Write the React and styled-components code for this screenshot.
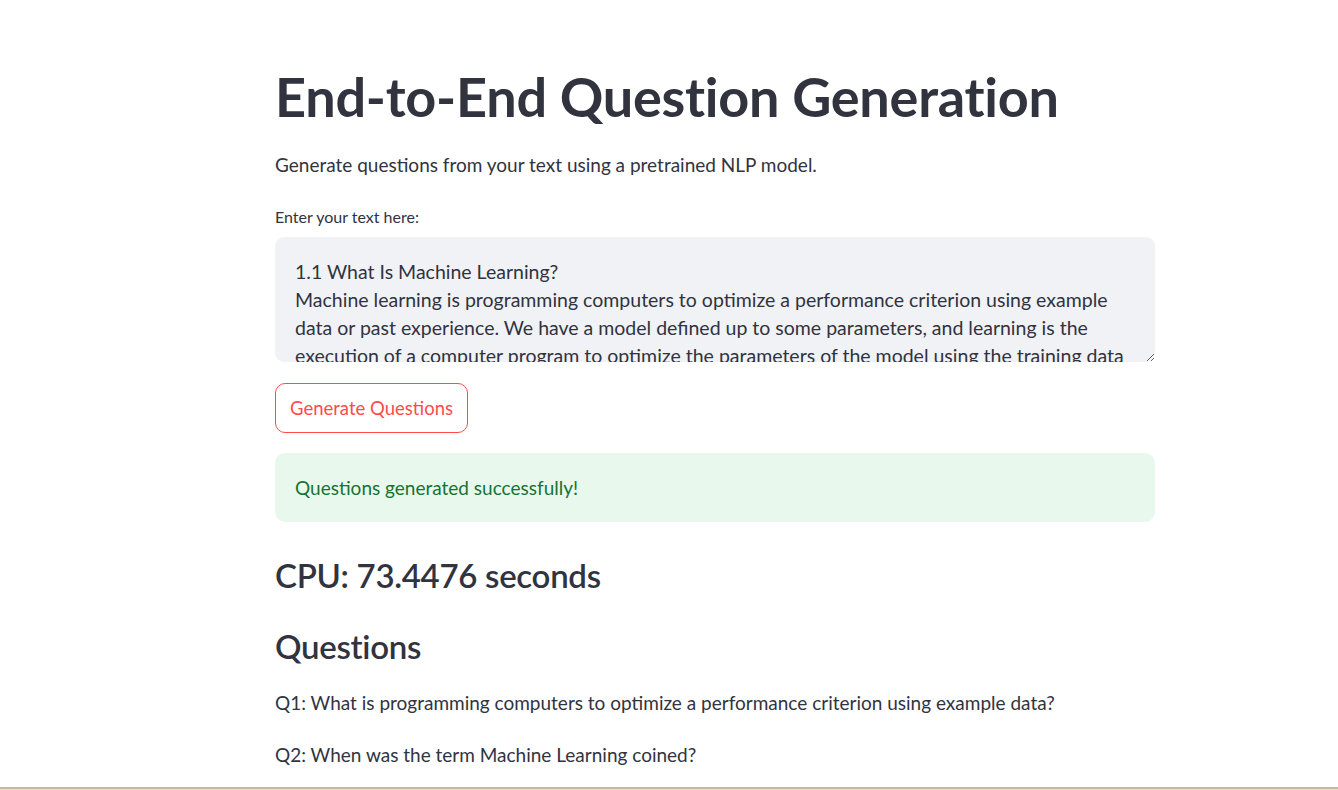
import React from "react";
import styled, { createGlobalStyle } from "styled-components";

const GlobalStyle = createGlobalStyle`
  html, body {
    margin: 0;
    padding: 0;
    background: #ffffff;
  }
  body {
    font-family: "Source Sans Pro", "Lato", "Noto Sans", sans-serif;
    color: #31333f;
    overflow: hidden;
  }
`;

const Page = styled.div`
  height: 790px;
  box-sizing: border-box;
  border-bottom: 1px solid #f1dcc6;
  box-shadow: inset 0 -2px 0 #c3b8aa;
  overflow: hidden;
`;

const Main = styled.main`
  width: 880px;
  margin-left: 275px;
  padding-top: 65px;
  display: flex;
  flex-direction: column;
`;

const Title = styled.h1`
  margin: 0;
  font-size: 54px;
  font-weight: 700;
  line-height: 64px;
  letter-spacing: -0.25px;
  color: #31333f;
`;

const Text = styled.p`
  margin: ${(p) => p.$mt || 0}px 0 0;
  font-size: 19px;
  line-height: 28px;
  color: #31333f;
`;

const Label = styled.label`
  margin-top: 27px;
  font-size: 16px;
  line-height: 22px;
  color: #31333f;
`;

const Area = styled.textarea`
  margin-top: 9px;
  height: 125px;
  box-sizing: border-box;
  padding: 21px 20px 0;
  border: none;
  border-radius: 9px;
  background: #f0f2f6;
  font-family: inherit;
  font-size: 19.5px;
  line-height: 28px;
  color: #31333f;
  resize: vertical;
  overflow: hidden;
  outline: none;
`;

const Button = styled.button`
  align-self: flex-start;
  margin-top: 21px;
  height: 50px;
  padding: 0 14px;
  border: 1px solid #ff4b4b;
  border-radius: 10px;
  background: #ffffff;
  font-family: inherit;
  font-size: 18.5px;
  color: #ff4b4b;
  cursor: pointer;
`;

const Alert = styled.div`
  margin-top: 20px;
  height: 69px;
  box-sizing: border-box;
  padding: 0 20px;
  display: flex;
  align-items: center;
  border-radius: 10px;
  background: #e8f8ed;
  color: #177233;
  font-size: 19px;
`;

const Heading = styled.h2`
  margin: ${(p) => p.$mt}px 0 0;
  font-size: 33px;
  font-weight: 600;
  line-height: 44px;
  color: #31333f;
  letter-spacing: -0.3px;
`;

const passage =
  "1.1 What Is Machine Learning?\nMachine learning is programming computers to optimize a performance criterion using example data or past experience. We have a model defined up to some parameters, and learning is the execution of a computer program to optimize the parameters of the model using the training data or past experience.";

const questions = [
  "Q1: What is programming computers to optimize a performance criterion using example data?",
  "Q2: When was the term Machine Learning coined?",
];

export default function App() {
  return (
    <Page>
      <GlobalStyle />
      <Main>
        <Title>End-to-End Question Generation</Title>
        <Text $mt={22}>Generate questions from your text using a pretrained NLP model.</Text>
        <Label>Enter your text here:</Label>
        <Area defaultValue={passage} />
        <Button>Generate Questions</Button>
        <Alert>Questions generated successfully!</Alert>
        <Heading $mt={31}>CPU: 73.4476 seconds</Heading>
        <Heading $mt={27}>Questions</Heading>
        {questions.map((q, i) => (
          <Text key={i} $mt={i === 0 ? 21 : 24}>
            {q}
          </Text>
        ))}
      </Main>
    </Page>
  );
}
